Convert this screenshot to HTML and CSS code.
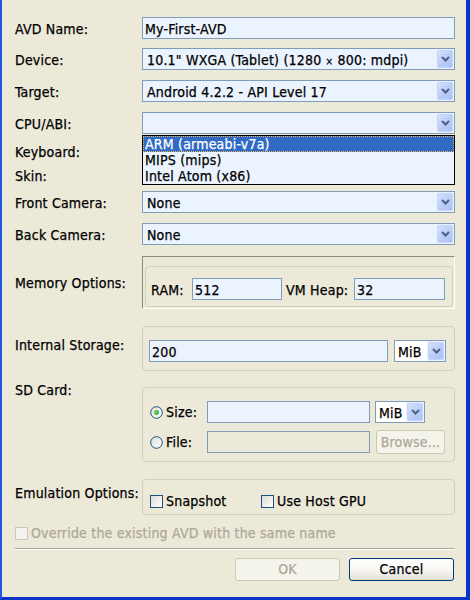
FILE: index.html
```html
<!DOCTYPE html>
<html>
<head>
<meta charset="utf-8">
<link rel="stylesheet" href="styles.css">
</head>
<body>
<div class="window">
  <div class="form">
    <div class="row">
      <div class="label">AVD Name:</div>
      <div class="field"><div class="input">My-First-AVD</div></div>
    </div>
    <div class="row mt9">
      <div class="label">Device:</div>
      <div class="field">
        <div class="select"><span class="sel-text">10.1" WXGA (Tablet) (1280 <span class="times">×</span> 800: mdpi)</span><span class="sel-btn"><svg width="9" height="6" viewBox="0 0 9 6"><path d="M1 1 L4.5 4.5 L8 1" fill="none" stroke="#4D6185" stroke-width="2"/></svg></span></div>
      </div>
    </div>
    <div class="row mt10">
      <div class="label">Target:</div>
      <div class="field">
        <div class="select"><span class="sel-text">Android 4.2.2 - API Level 17</span><span class="sel-btn"><svg width="9" height="6" viewBox="0 0 9 6"><path d="M1 1 L4.5 4.5 L8 1" fill="none" stroke="#4D6185" stroke-width="2"/></svg></span></div>
      </div>
    </div>
    <div class="row mt10">
      <div class="label">CPU/ABI:</div>
      <div class="field">
        <div class="select"><span class="sel-text"></span><span class="sel-btn"><svg width="9" height="6" viewBox="0 0 9 6"><path d="M1 1 L4.5 4.5 L8 1" fill="none" stroke="#4D6185" stroke-width="2"/></svg></span></div>
        <ul class="droplist">
          <li class="selected">ARM (armeabi-v7a)</li>
          <li>MIPS (mips)</li>
          <li>Intel Atom (x86)</li>
        </ul>
      </div>
    </div>
    <div class="row mt9 h16">
      <div class="label">Keyboard:</div>
      <div class="field"></div>
    </div>
    <div class="row mt8 h16">
      <div class="label">Skin:</div>
      <div class="field"></div>
    </div>
    <div class="row mt8">
      <div class="label">Front Camera:</div>
      <div class="field">
        <div class="select"><span class="sel-text">None</span><span class="sel-btn"><svg width="9" height="6" viewBox="0 0 9 6"><path d="M1 1 L4.5 4.5 L8 1" fill="none" stroke="#4D6185" stroke-width="2"/></svg></span></div>
      </div>
    </div>
    <div class="row mt10">
      <div class="label">Back Camera:</div>
      <div class="field">
        <div class="select"><span class="sel-text">None</span><span class="sel-btn"><svg width="9" height="6" viewBox="0 0 9 6"><path d="M1 1 L4.5 4.5 L8 1" fill="none" stroke="#4D6185" stroke-width="2"/></svg></span></div>
      </div>
    </div>

    <div class="row mt11">
      <div class="label">Memory Options:</div>
      <div class="inset">
        <div class="group memgroup">
          <span class="ram-label">RAM:</span>
          <div class="input w90">512</div>
          <span class="heap-label">VM Heap:</span>
          <div class="input w91">32</div>
        </div>
      </div>
    </div>

    <div class="row mt17 top">
      <div class="label pt-internal">Internal Storage:</div>
      <div class="group storage">
        <div class="input w239">200</div>
        <div class="select w52"><span class="sel-text small">MiB</span><span class="sel-btn"><svg width="9" height="6" viewBox="0 0 9 6"><path d="M1 1 L4.5 4.5 L8 1" fill="none" stroke="#4D6185" stroke-width="2"/></svg></span></div>
      </div>
    </div>

    <div class="row mt16 top">
      <div class="label pt-sd">SD Card:</div>
      <div class="group sdcard">
        <div class="sd-line">
          <div class="radio-item">
            <svg class="radio" width="13" height="13" viewBox="0 0 13 13">
              <defs>
                <linearGradient id="rg1" x1="0" y1="0" x2="1" y2="1"><stop offset="0" stop-color="#DCDCD7"/><stop offset="1" stop-color="#FFFFFF"/></linearGradient>
                <radialGradient id="dot" cx="0.4" cy="0.4" r="0.6"><stop offset="0" stop-color="#6FE26B"/><stop offset="1" stop-color="#21A121"/></radialGradient>
              </defs>
              <circle cx="6.5" cy="6.5" r="5.8" fill="url(#rg1)" stroke="#1C5180" stroke-width="1"/>
              <circle cx="6.5" cy="6.5" r="2.4" fill="url(#dot)"/>
            </svg>
            <span>Size:</span>
          </div>
          <div class="input w163"></div>
          <div class="select w50"><span class="sel-text small">MiB</span><span class="sel-btn"><svg width="9" height="6" viewBox="0 0 9 6"><path d="M1 1 L4.5 4.5 L8 1" fill="none" stroke="#4D6185" stroke-width="2"/></svg></span></div>
        </div>
        <div class="sd-line mt8">
          <div class="radio-item">
            <svg class="radio" width="13" height="13" viewBox="0 0 13 13">
              <defs>
                <linearGradient id="rg2" x1="0" y1="0" x2="1" y2="1"><stop offset="0" stop-color="#DCDCD7"/><stop offset="1" stop-color="#FFFFFF"/></linearGradient>
              </defs>
              <circle cx="6.5" cy="6.5" r="5.8" fill="url(#rg2)" stroke="#1C5180" stroke-width="1"/>
            </svg>
            <span>File:</span>
          </div>
          <div class="input w163 disabled"></div>
          <div class="button browse disabled-btn">Browse...</div>
        </div>
      </div>
    </div>

    <div class="row mt17 top">
      <div class="label pt-emu">Emulation Options:</div>
      <div class="group emulation">
        <div class="check-item w111"><span class="checkbox"></span><span>Snapshot</span></div>
        <div class="check-item"><span class="checkbox"></span><span>Use Host GPU</span></div>
      </div>
    </div>

    <div class="row mt11 h14">
      <div class="check-item disabled-text"><span class="checkbox dis"></span><span>Override the existing AVD with the same name</span></div>
    </div>

    <div class="separator"></div>

    <div class="buttons">
      <div class="button disabled-btn">OK</div>
      <div class="button cancel">Cancel</div>
    </div>
  </div>
</div>
</body>
</html>
```
FILE: styles.css
```css
* { box-sizing: border-box; }
html, body { margin: 0; padding: 0; }
body {
  width: 470px;
  height: 600px;
  overflow: hidden;
  background: #ECE9D8;
  font-family: "DejaVu Sans Condensed", "DejaVu Sans", sans-serif;
  font-size: 14px;
  letter-spacing: 0.2px;
  -webkit-text-stroke: 0.25px currentColor;
  color: #000;
}
.window {
  width: 470px;
  height: 600px;
  background: #ECE9D8;
  border-left: 2px solid #2159E4;
  border-right: 4px solid #0A33CC;
  border-bottom: 3px solid #0A33CC;
}
.form { padding: 17px 11px 0 13px; }
.row { display: flex; align-items: center; min-height: 22px; }
.row.top { align-items: flex-start; }
.row.h16 { min-height: 16px; height: 16px; }
.row.h14 { min-height: 14px; height: 14px; }
.mt8 { margin-top: 8px; }
.mt9 { margin-top: 9px; }
.mt10 { margin-top: 10px; }
.mt11 { margin-top: 11px; }
.mt16 { margin-top: 16px; }
.mt17 { margin-top: 17px; }
.label { width: 127px; flex: none; line-height: 16px; white-space: nowrap; padding-top: 1px; }
.pt-internal { padding-top: 11px; }
.pt-sd { margin-top: -6px; }
.pt-emu { padding-top: 6px; }
.field { width: 313px; position: relative; }

.input {
  height: 22px;
  border: 1px solid #7F9DB9;
  background: #EBF3FE;
  padding: 1px 2px 0;
  line-height: 20px;
  white-space: nowrap;
  overflow: hidden;
  flex: none;
}
.input.disabled { background: #ECE9D8; }
.w90 { width: 90px; }
.w91 { width: 91px; }
.w239 { width: 239px; }
.w163 { width: 163px; }
.w52 { width: 52px; }
.w50 { width: 50px; }
.w111 { width: 111px; }

.select {
  height: 22px;
  border: 1px solid #7F9DB9;
  background: #EBF3FE;
  display: flex;
  align-items: stretch;
  flex: none;
}
.sel-text {
  flex: 1;
  padding: 1px 0 0 4px;
  line-height: 20px;
  white-space: nowrap;
  overflow: hidden;
}
.sel-text.small { padding-left: 3px; background: #FFFFFF; }
.times { font-size: 10px; }
.sel-btn {
  width: 16px;
  margin: 1px;
  flex: none;
  border: 1px solid #C3D3FD;
  border-radius: 2px;
  background: linear-gradient(135deg, #D6E2FC 0%, #B7CBF6 60%, #AEC3F3 100%);
  display: flex;
  align-items: center;
  justify-content: center;
}

.droplist {
  position: absolute;
  left: 0;
  right: 0;
  top: calc(100% + 1px);
  margin: 0;
  padding: 0;
  list-style: none;
  border: 1px solid #000;
  background: #EBF3FE;
  z-index: 2;
}
.droplist li {
  height: 16px;
  line-height: 16px;
  padding-left: 2px;
  white-space: nowrap;
}
.droplist li.selected {
  background: #316AC5;
  color: #FFFFFF;
  outline: 1px dotted #E7B45A;
  outline-offset: -1px;
}

.check-item { display: flex; align-items: center; white-space: nowrap; line-height: 16px; }
.checkbox {
  width: 13px;
  height: 13px;
  flex: none;
  border: 1px solid #1C5180;
  background: linear-gradient(135deg, #DCDCD7 0%, #F4F4F0 70%, #FFFFFF 100%);
  margin-right: 3px;
}
.checkbox.dis { border-color: #CAC8BB; background: #F4F3EE; }
.disabled-text { color: #ACA899; }

.inset {
  width: 313px;
  height: 53px;
  border-top: 1px solid #8C8A7E;
  border-left: 1px solid #8C8A7E;
  border-right: 1px solid #FFFFFF;
  border-bottom: 1px solid #FFFFFF;
  padding: 9px 1px 1px 2px;
}
.group {
  border: 1px solid #D0D0BF;
  border-radius: 4px;
}
.memgroup {
  height: 41px;
  display: flex;
  align-items: flex-start;
  padding: 11px 0 0 5px;
}
.ram-label, .heap-label { line-height: 22px; flex: none; padding-top: 1px; }
.ram-label { width: 41px; }
.heap-label { width: 68px; margin-left: 4px; }

.storage {
  width: 313px;
  height: 45px;
  display: flex;
  gap: 6px;
  padding: 13px 0 0 6px;
}
.sdcard {
  width: 313px;
  height: 75px;
  padding: 13px 0 0 7px;
}
.sd-line { display: flex; align-items: center; height: 22px; }
.sd-line .select { margin-left: 5px; }
.radio-item { width: 57px; flex: none; display: flex; align-items: center; line-height: 16px; }
.radio { flex: none; margin-right: 3px; }

.button {
  width: 105px;
  height: 23px;
  border-radius: 3px;
  text-align: center;
  line-height: 21px;
  flex: none;
}
.browse { width: 69px; height: 24px; line-height: 22px; margin-left: 6px; }
.disabled-btn {
  border: 1px solid #C9C7BA;
  background: #F5F4EA;
  color: #ACA899;
}
.cancel {
  border: 1px solid #003C74;
  background: linear-gradient(#FFFFFF 0%, #F4F3EE 60%, #E3E0D4 100%);
  color: #000;
}

.emulation {
  width: 313px;
  height: 36px;
  display: flex;
  align-items: flex-start;
  padding: 13px 0 0 7px;
}

.separator {
  margin-top: 8px;
  height: 2px;
  border-top: 1px solid #ACA899;
  border-bottom: 1px solid #FFFFFF;
}
.buttons {
  margin-top: 8px;
  display: flex;
  justify-content: flex-end;
  gap: 9px;
  padding-right: 1px;
}
```
